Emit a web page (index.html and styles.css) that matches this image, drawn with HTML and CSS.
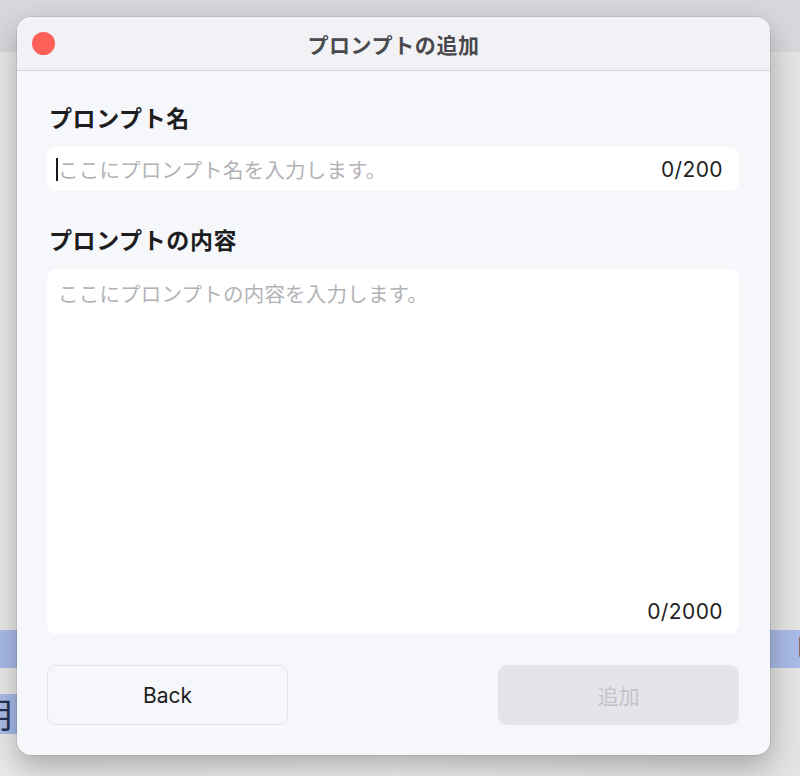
FILE: index.html
```html
<!DOCTYPE html>
<html lang="ja">
<head>
<meta charset="utf-8">
<title>プロンプトの追加</title>
<link rel="stylesheet" href="styles.css">
</head>
<body>
<div class="backdrop">
  <div class="bg-top"></div>
  <div class="bg-body">
    <div class="bg-spacer"></div>
    <div class="bg-row bg-row-a"><span class="bg-glyph-right">「</span></div>
    <div class="bg-row bg-row-b"><span class="bg-glyph-left">明</span></div>
  </div>
</div>

<div class="window">
  <div class="titlebar">
    <span class="close-dot"></span>
    <span class="title">プロンプトの追加</span>
  </div>
  <div class="content">
    <div class="label">プロンプト名</div>
    <div class="input">
      <span class="caret"></span>
      <span class="placeholder">ここにプロンプト名を入力します。</span>
      <span class="count">0/200</span>
    </div>
    <div class="label label-second">プロンプトの内容</div>
    <div class="textarea">
      <span class="placeholder">ここにプロンプトの内容を入力します。</span>
      <span class="count count-area">0/2000</span>
    </div>
    <div class="actions">
      <button class="btn btn-back">Back</button>
      <button class="btn btn-add" disabled>追加</button>
    </div>
  </div>
</div>
</body>
</html>
```
FILE: styles.css
```css
html, body {
  margin: 0;
  padding: 0;
}
body {
  width: 800px;
  height: 776px;
  overflow: hidden;
  position: relative;
  font-family: "Inter", "Noto Sans CJK JP", sans-serif;
  background: #ebebeb;
}
.backdrop {
  display: flex;
  flex-direction: column;
  height: 776px;
}
.bg-top {
  height: 52px;
  background: #d8d8dc;
}
.bg-body {
  flex: 1;
  background: linear-gradient(90deg, #e9e9e9 0%, #efefef 50%, #e3e3e3 100%);
  display: flex;
  flex-direction: column;
}
.bg-spacer {
  height: 578px;
}
.bg-row {
  position: relative;
  overflow: hidden;
}
.bg-row-a {
  height: 38px;
  background: #a9bbe7;
}
.bg-row-b {
  margin-top: 26px;
  height: 40px;
  width: 30px;
  background: #a9bbe7;
}
.bg-glyph-right {
  position: absolute;
  left: 780px;
  top: 2px;
  font-family: "Noto Sans CJK JP", sans-serif;
  font-size: 30px;
  line-height: 34px;
  color: #22304f;
}
.bg-glyph-left {
  position: absolute;
  left: -22px;
  top: 0;
  font-family: "Noto Sans CJK JP", sans-serif;
  font-size: 34px;
  line-height: 40px;
  color: #22304f;
}

.window {
  position: absolute;
  left: 17px;
  top: 17px;
  width: 753px;
  height: 738px;
  border-radius: 14px;
  background: #f6f7fa;
  box-shadow: 0 0 0 1px rgba(0,0,0,0.08), 0 12px 30px rgba(0,0,0,0.28);
  overflow: hidden;
  display: flex;
  flex-direction: column;
}
.titlebar {
  height: 53px;
  flex: none;
  background: #f2f2f6;
  border-bottom: 1px solid #d6d6da;
  display: flex;
  align-items: center;
  justify-content: center;
  position: relative;
}
.close-dot {
  position: absolute;
  left: 15px;
  top: 15px;
  width: 23px;
  height: 23px;
  border-radius: 50%;
  background: #fe5f57;
}
.title {
  font-family: "Noto Sans CJK JP", sans-serif;
  font-weight: 700;
  font-size: 21px;
  color: #4a4a4e;
  letter-spacing: 0.6px;
}
.content {
  flex: 1;
  display: flex;
  flex-direction: column;
  padding: 31px 31px 31px 30px;
}
.label {
  font-family: "Noto Sans CJK JP", sans-serif;
  font-weight: 700;
  font-size: 23px;
  line-height: 31px;
  color: #1d1d1f;
  letter-spacing: 0.6px;
  padding-left: 2px;
}
.label-second {
  margin-top: 33px;
}
.input {
  margin-top: 14px;
  height: 44px;
  background: #ffffff;
  border-radius: 9px;
  display: flex;
  align-items: center;
  padding: 0 16px 0 9px;
  position: relative;
}
.caret {
  width: 2px;
  height: 23px;
  background: #1a1a1a;
  flex: none;
}
.placeholder {
  font-family: "Noto Sans CJK JP", sans-serif;
  font-size: 20.5px;
  line-height: 28px;
  color: #b3b3b7;
  letter-spacing: 0.2px;
}
.input .placeholder {
  flex: 1;
}
.count {
  font-family: "Inter", sans-serif;
  font-size: 21px;
  color: #1f1f1f;
  letter-spacing: 0.4px;
}
.textarea {
  margin-top: 14px;
  height: 365px;
  background: #ffffff;
  border-radius: 9px;
  display: flex;
  flex-direction: column;
  justify-content: space-between;
  padding: 10px 16px 7px 11px;
  box-sizing: border-box;
}
.count-area {
  align-self: flex-end;
  line-height: 30px;
}
.actions {
  margin-top: 31px;
  display: flex;
  justify-content: space-between;
}
.btn {
  width: 241px;
  height: 60px;
  border-radius: 9px;
  font-size: 21px;
  box-sizing: border-box;
  padding: 0;
  cursor: default;
}
.btn-back {
  font-family: "Inter", sans-serif;
  background: #f6f7fa;
  border: 1px solid #e1e1e5;
  color: #1d1d1f;
}
.btn-add {
  font-family: "Noto Sans CJK JP", sans-serif;
  background: #e4e5e8;
  border: none;
  color: #c3c3c7;
}
```
